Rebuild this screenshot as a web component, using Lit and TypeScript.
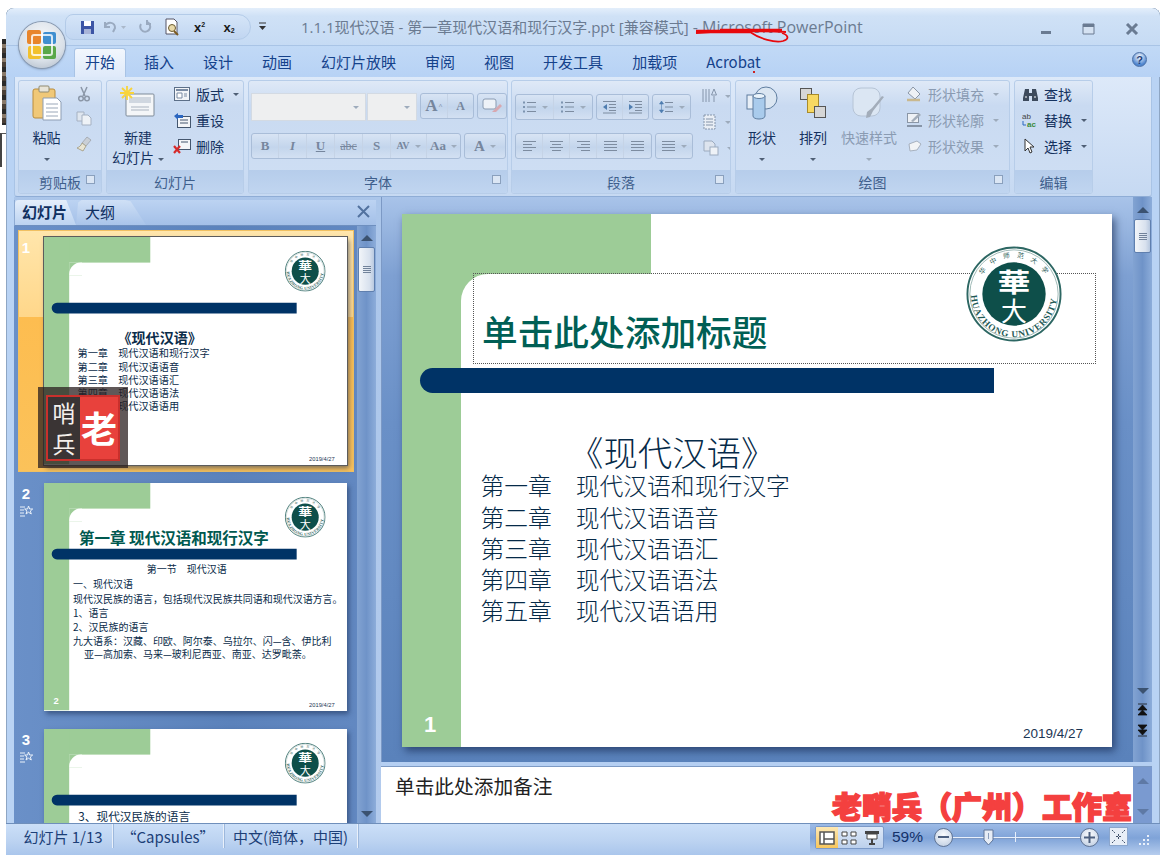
import { LitElement, html, css, svg } from "lit";
import { customElement, property } from "lit/decorators.js";

const CJK = `"Noto Sans CJK SC", "Liberation Sans", sans-serif`;

type Line = { text: string; x: number; y: number; size: number; bold?: boolean; color?: string };

const chapters: Line[] = [
  { text: "第一章　现代汉语和现行汉字", x: 78.5, y: 271, size: 23.8 },
  { text: "第二章　现代汉语语音", x: 78.5, y: 303, size: 23.8 },
  { text: "第三章　现代汉语语汇", x: 78.5, y: 334, size: 23.8 },
  { text: "第四章　现代汉语语法", x: 78.5, y: 365, size: 23.8 },
  { text: "第五章　现代汉语语用", x: 78.5, y: 396, size: 23.8 },
];

const slides: { num: string; lines: Line[] }[] = [
  { num: "", lines: [{ text: "《现代汉语》", x: 172, y: 234, size: 33, bold: true }, ...chapters] },
  {
    num: "2",
    lines: [
      { text: "第一章 现代汉语和现行汉字", x: 82, y: 126, size: 36.4, bold: true, color: "#00594f" },
      { text: "第一节　现代汉语", x: 241, y: 201, size: 23.4 },
      { text: "一、现代汉语", x: 68, y: 237, size: 23.4 },
      { text: "现代汉民族的语言，包括现代汉民族共同语和现代汉语方言。", x: 68, y: 272, size: 23.4 },
      { text: "1、语言", x: 68, y: 305, size: 23.4 },
      { text: "2、汉民族的语言", x: 68, y: 337, size: 23.4 },
      { text: "九大语系：汉藏、印欧、阿尔泰、乌拉尔、闪—含、伊比利", x: 68, y: 370, size: 23.4 },
      { text: "亚—高加索、马来—玻利尼西亚、南亚、达罗毗荼。", x: 94, y: 401, size: 23.4 },
    ],
  },
  { num: "", lines: [{ text: "3、现代汉民族的语言", x: 80, y: 204, size: 27.5 }] },
];

const logo = (size: number) => html`
  <svg width=${size} height=${size} viewBox="0 0 100 100">
    <defs>
      <path id="arcTop" d="M12 50 A38 38 0 0 1 88 50"></path>
      <path id="arcBottom" d="M5 50 A45 45 0 0 0 95 50"></path>
    </defs>
    <circle cx="50" cy="50" r="48.5" fill="#fff" stroke="#2d6763" stroke-width="2"></circle>
    <circle cx="50" cy="50" r="46" fill="none" stroke="#9db8b5" stroke-width="1"></circle>
    <circle cx="50" cy="50" r="33" fill="#0e4f4a"></circle>
    <text font-size="7" fill="#1f5a56" font-family=${CJK} letter-spacing="7"><textPath href="#arcTop" startOffset="17%">华中师范大学</textPath></text>
    <text font-size="9.6" font-weight="700" fill="#1f5a56" font-family="Liberation Serif, serif" letter-spacing="0.8"><textPath href="#arcBottom" startOffset="1%">HUAZHONG UNIVERSITY</textPath></text>
    <text x="50" y="50" text-anchor="middle" font-size="34" font-weight="700" fill="#fff" font-family=${CJK} transform="translate(0 8) scale(1 .8)">華</text>
    <text x="50" y="78" text-anchor="middle" font-size="27" fill="#fff" font-family=${CJK}>大</text>
  </svg>
`;

@customElement("slide-face")
export class SlideFace extends LitElement {
  @property({ type: Array }) lines: Line[] = [];
  @property() num = "";
  @property({ type: Boolean }) editing = false;

  static styles = css`
    :host { display: block; position: relative; width: 710px; height: 533px; background: #fff; overflow: hidden; font-family: "Noto Sans CJK SC", "Liberation Sans", sans-serif; }
    .band { position: absolute; left: 0; top: 0; width: 249px; height: 60px; background: #9dcc97; }
    .side { position: absolute; left: 0; top: 0; bottom: 0; width: 59px; background: #9dcc97; }
    .corner { position: absolute; left: 59px; top: 60px; width: 30px; height: 30px; background: #9dcc97; }
    .corner::after { content: ""; position: absolute; inset: 0; background: #fff; border-top-left-radius: 27px; }
    .bar { position: absolute; left: 18px; top: 154px; width: 574px; height: 25px; background: #003366; border-radius: 13px 0 0 13px; }
    .logo { position: absolute; left: 564px; top: 32px; width: 96px; height: 96px; }
    .box { position: absolute; left: 71px; top: 59px; width: 621px; height: 89px; border: 1px dotted #555; }
    .title { position: absolute; left: 80px; top: 92px; font-size: 35.7px; line-height: 50px; font-weight: 500; color: #005f55; white-space: nowrap; }
    .line { position: absolute; white-space: nowrap; color: #0a2c4a; font-weight: 400; line-height: 1.4; }
    :host([editing]) .line { font-weight: 300; color: #062a48; }
    .line.bold { font-weight: 700; }
    .date { position: absolute; left: 621px; top: 511px; font: 13.5px/18px "Liberation Sans", sans-serif; color: #1c3553; }
    .num { position: absolute; left: 22px; top: 497px; font: 700 22px/28px "Liberation Sans", sans-serif; color: #fff; }
  `;

  render() {
    return html`
      <div class="band"></div>
      <div class="side"></div>
      <div class="corner"></div>
      ${this.editing ? html`<div class="box"></div><div class="title">单击此处添加标题</div>` : ""}
      <div class="bar"></div>
      <div class="logo">${logo(96)}</div>
      ${this.lines.map(
        (l) => html`<div
          class="line ${l.bold ? "bold" : ""}"
          style="left:${l.x}px;top:${l.y - l.size * 0.7}px;font-size:${l.size}px;${l.color ? `color:${l.color}` : ""}"
        >${l.text}</div>`
      )}
      <div class="date">2019/4/27</div>
      ${this.num ? html`<div class="num">${this.num}</div>` : ""}
    `;
  }
}

const ico = {
  paste: html`<svg width="34" height="38" viewBox="0 0 34 38"><rect x="3" y="5" width="22" height="29" rx="2" fill="#f0c878" stroke="#b98c3c"/><rect x="9" y="2" width="10" height="6" rx="1" fill="#e8e4d8" stroke="#8f8a70"/><path d="M13 14h14l4 4v18H13z" fill="#fff" stroke="#8d9db3"/><path d="M16 20h12M16 24h12M16 28h12M16 32h12" stroke="#9aa7b8"/></svg>`,
  cut: html`<svg width="14" height="16" viewBox="0 0 14 16"><path d="M4 1l4 9M10 1L6 10" stroke="#8b97a8" stroke-width="1.5" fill="none"/><circle cx="4" cy="12.5" r="2.3" fill="none" stroke="#8b97a8" stroke-width="1.5"/><circle cx="10" cy="12.5" r="2.3" fill="none" stroke="#8b97a8" stroke-width="1.5"/></svg>`,
  copy: html`<svg width="16" height="15" viewBox="0 0 16 15"><path d="M1 1h7v9H1z" fill="#dfe6ef" stroke="#a5b1c2"/><path d="M6 4h6l3 3v7H6z" fill="#eef2f7" stroke="#a5b1c2"/></svg>`,
  brush: html`<svg width="16" height="16" viewBox="0 0 16 16"><path d="M11 1l4 3-5 6-4-3z" fill="#c9cfd6" stroke="#a7adb5"/><path d="M6 7l4 3-3 5-6-3c2-1 4-2 5-5z" fill="#e9e5d3" stroke="#aaa58f"/></svg>`,
  newSlide: html`<svg width="36" height="34" viewBox="0 0 36 34"><rect x="6" y="8" width="28" height="22" rx="1" fill="#f4f6f8" stroke="#7f8b99"/><path d="M9 11h22v6H9z" fill="#d0d7e0"/><path d="M11 21h18M11 24h18" stroke="#aab3bf"/><path d="M7 0v14M0 7h14M2 2l10 10M12 2L2 12" stroke="#f8d43c" stroke-width="1.8"/></svg>`,
  layout: html`<svg width="16" height="14" viewBox="0 0 16 14"><rect x=".5" y=".5" width="15" height="13" fill="#f3f5f8" stroke="#5c6f88"/><path d="M2 3h12" stroke="#7a8ba3" stroke-width="2"/><path d="M3 6h5v5H3z" fill="#fff" stroke="#7a8ba3"/><path d="M10 7h3M10 9h3" stroke="#7a8ba3"/></svg>`,
  reset: html`<svg width="18" height="16" viewBox="0 0 18 16"><rect x="4.500" y="4.500" width="13" height="11" fill="#f3f5f8" stroke="#44566e"/><path d="M7 8h8M7 11h8" stroke="#44566e"/><path d="M1 4l4-3v2h5v3H5v2z" fill="#2b66c0"/></svg>`,
  del: html`<svg width="18" height="15" viewBox="0 0 18 15"><rect x="5.500" y=".5" width="12" height="10" fill="#f3f5f8" stroke="#44566e"/><path d="M8 3h7" stroke="#44566e"/><path d="M1 7l6 7M7 7l-6 7" stroke="#d62b2b" stroke-width="2.200"/></svg>`,
  shape: html`<svg width="32" height="34" viewBox="0 0 32 34"><circle cx="20" cy="12" r="11" fill="#dbe6f2" stroke="#5f7d9f"/><rect x="1" y="9" width="14" height="14" fill="#e8eff7" stroke="#5f7d9f"/><path d="M7 10h12v20c0 4-12 4-12 0z" fill="#a9cbec" stroke="#5f7d9f"/><ellipse cx="13" cy="10" rx="6" ry="2.500" fill="#e9f3fb" stroke="#5f7d9f"/></svg>`,
  arrange: html`<svg width="26" height="31" viewBox="0 0 26 31"><rect x=".5" y=".5" width="11" height="11" fill="#d6d6d6" stroke="#555"/><rect x="7.500" y="6.500" width="11" height="18" fill="#f7d862" stroke="#a88b2c"/><rect x="14.500" y="18.500" width="11" height="11" fill="#d6d6d6" stroke="#555"/></svg>`,
  quick: html`<svg width="34" height="32" viewBox="0 0 34 32"><rect x="1" y="1" width="27" height="28" rx="8" fill="#dbe6f3" stroke="#b6c4d6"/><path d="M32 10L21 24l-3 6-4 1 1-6 5-4 10-12z" fill="#a3adba"/></svg>`,
  fill: html`<svg width="17" height="16" viewBox="0 0 17 16"><path d="M7 1l7 7-5 5-7-6z" fill="#eef1f5" stroke="#8a96a6"/><path d="M1 14h13" stroke="#c9b88e" stroke-width="2.500"/></svg>`,
  outline: html`<svg width="17" height="16" viewBox="0 0 17 16"><rect x="1.500" y="1.500" width="11" height="9" fill="#eef1f5" stroke="#8a96a6"/><path d="M5 9l8-8 2 2-8 7z" fill="#a3adba"/><path d="M1 14h15" stroke="#8795a8" stroke-width="2"/></svg>`,
  effect: html`<svg width="17" height="16" viewBox="0 0 17 16"><path d="M3 6l8-3 4 3-4 6-7 1z" fill="#f2f4f6" stroke="#a7b1bf"/></svg>`,
  find: html`<svg width="17" height="15" viewBox="0 0 17 15"><path d="M3 2h4v4h3V2h4l2 9v3h-6V9H7v5H1v-3z" fill="#3d4a5c"/><path d="M3 10h2M12 10h2" stroke="#fff"/></svg>`,
  replace: html`<svg width="16" height="16" viewBox="0 0 16 16"><text x="0" y="7" font-size="8" font-family="Liberation Sans" fill="#444">ab</text><text x="5" y="15" font-size="8" font-weight="700" font-family="Liberation Sans" fill="#3a8a3a">ac</text><path d="M1 9v4h3" stroke="#2b66c0" fill="none"/></svg>`,
  select: html`<svg width="12" height="16" viewBox="0 0 12 16"><path d="M1 1v12l3-3 2 5 2-1-2-5h4z" fill="#fff" stroke="#333"/></svg>`,
  star: html`<svg width="14" height="14" viewBox="0 0 14 14"><path d="M1 3h5M1 6h4M1 9h4M1 12h5" stroke="#eaf1fa"/><path d="M9.500 2l1.200 3h3l-2.400 2 1 3-2.800-1.800L7 10l1-3-2.400-2h3z" fill="none" stroke="#eaf1fa"/></svg>`,
  colText: html`<svg width="16" height="16" viewBox="0 0 16 16"><path d="M1 1v13M4 1v13M7 1v13" stroke="#8494aa"/><path d="M12 1l-2.500 6h5zM12 14V8" stroke="#8494aa" fill="none"/></svg>`,
  align: html`<svg width="16" height="16" viewBox="0 0 16 16"><rect x="2" y="1" width="11" height="14" fill="#e9eef5" stroke="#8494aa" stroke-dasharray="2 1"/><path d="M4 5h7M4 8h7M4 11h7" stroke="#8494aa"/></svg>`,
  smart: html`<svg width="18" height="16" viewBox="0 0 18 16"><path d="M2 1h8l3 3v7H2z" fill="#dde4ee" stroke="#9cabbf"/><rect x="8" y="7" width="8" height="8" fill="#eef2f7" stroke="#9cabbf"/></svg>`,
};

const lines = (rows: number[][], color = "#7d8ca0") => html`<svg width="15" height="14" viewBox="0 0 15 14">${rows.map(
  ([x1, x2], i) => svg`<path d="M${x1} ${2.5 + i * 3}H${x2}" stroke=${color}></path>`
)}</svg>`;

const listIcon = html`<svg width="15" height="14" viewBox="0 0 15 14"><path d="M5 2.500h9M5 7h9M5 11.500h9" stroke="#7d8ca0"/><path d="M1 1.500h2v2H1zM1 6h2v2H1zM1 10.500h2v2H1z" fill="#7d94b0"/></svg>`;
const indentL = html`<svg width="15" height="14" viewBox="0 0 15 14"><path d="M1 1.500h13M7 4.500h7M7 7.500h7M7 10.500h7M1 13h13" stroke="#7d8ca0"/><path d="M5 4v6L1 7z" fill="#4f7db0"/></svg>`;
const indentR = html`<svg width="15" height="14" viewBox="0 0 15 14"><path d="M1 1.500h13M7 4.500h7M7 7.500h7M7 10.500h7M1 13h13" stroke="#7d8ca0"/><path d="M1 4v6L5 7z" fill="#4f7db0"/></svg>`;
const spacing = html`<svg width="15" height="14" viewBox="0 0 15 14"><path d="M6 2.500h8M6 7h8M6 11.500h8" stroke="#7d8ca0"/><path d="M2.500 1L4.500 4h-4zM2.500 13L.5 10h4zM2.500 4v6" fill="#4f7db0" stroke="#4f7db0" stroke-width=".6"/></svg>`;

@customElement("app-root")
export class AppRoot extends LitElement {
  static styles = css`
    :host { display: block; position: relative; width: 1162px; height: 857px; background: #fff; overflow: hidden; font-family: "Noto Sans CJK SC", "Liberation Sans", sans-serif; color: #15428b; }
    .stray { position: absolute; left: 2px; top: 39px; width: 4px; height: 86px; background: repeating-linear-gradient(180deg, #2a2a2a 0 5px, #8a7a6a 5px 9px, #4a4038 9px 14px); }
    .stray2 { position: absolute; left: 0; top: 133px; width: 6px; height: 34px; border-left: 2px solid #444; border-top: 1px solid #555; box-sizing: border-box; }
    .win { position: absolute; left: 6px; top: 8px; width: 1154px; height: 847px; display: flex; flex-direction: column; border-radius: 8px 8px 0 0; background: #b9d3f4; box-shadow: inset 0 1px 0 #4a5f78, inset 1px 0 0 #8ea6c4, inset -1px 0 0 #8ea6c4; overflow: hidden; }

    .titlebar { height: 38px; flex: none; display: flex; align-items: center; background: linear-gradient(180deg, #e3eefb 0, #cfe1f6 22%, #c6dbf4 100%); border-bottom: 1px solid #a9c4e6; box-sizing: border-box; padding-left: 59px; }
    .qat { width: 186px; height: 26px; margin-top: 1px; display: flex; align-items: center; padding-left: 9px; box-sizing: border-box; border-radius: 8px 13px 13px 8px; background: linear-gradient(180deg, #d5e5f8, #c1d6f1); border: 1px solid #b3cbe8; }
    .qat span, .qat svg { flex: none; }
    .qat .q { display: flex; justify-content: center; align-items: center; font: 700 13px "Liberation Sans", sans-serif; color: #1a1a1a; }
    .more { margin-left: 7px; width: 9px; }
    .wintitle { margin-left: 34px; font-family: "Open Sans", "Noto Sans CJK SC", sans-serif; font-size: 15px; color: #6b7b91; white-space: nowrap; width: 590px; line-height: 20px; }
    .wintitle span { font-size: 16px; }
    .winbtns { margin: 4px 0 0 auto; display: flex; align-items: center; padding-right: 21px; gap: 30px; }
    .winbtns svg { display: block; }

    .officebtn { position: absolute; left: 19px; top: 22px; width: 46px; height: 46px; border-radius: 50%; background: radial-gradient(circle at 50% 35%, #f6f8fa 0, #d9e0e8 60%, #a9b4c2 100%); box-shadow: 0 0 0 1px #8b9bb0, 0 1px 3px #6d83a3; display: flex; align-items: center; justify-content: center; }

    .tabs { height: 31px; flex: none; display: flex; align-items: flex-end; background: linear-gradient(180deg, #c1d9f6, #b7d2f5); padding-left: 64.500px; box-sizing: border-box; font-size: 15px; position: relative; }
    .tab { height: 28px; line-height: 26px; padding: 0 11px; margin: 0 3.500px; white-space: nowrap; }
    .tab.on { background: linear-gradient(180deg, #f2f7fd, #dfeafa); border: 1px solid #a8c3e5; border-bottom: 0; border-radius: 3px 3px 0 0; padding: 0 10px; }
    .help { position: absolute; right: 13px; top: 6px; width: 15px; height: 15px; border-radius: 50%; background: radial-gradient(circle at 50% 30%, #fff, #4f86d0 70%); border: 1px solid #4a6fa5; text-align: center; font: 700 11px/15px "Liberation Sans", sans-serif; color: #1f3f7a; box-sizing: border-box; }
    .dot { position: absolute; left: 747px; top: 25px; width: 2px; height: 2px; background: #c22; }

    .ribbon { height: 120px; flex: none; margin: 0 8px; padding: 3px 3px 2px; box-sizing: border-box; display: flex; gap: 4px; background: linear-gradient(180deg, #dde9f9, #c6d9f2); border: 1px solid #a9c4e6; border-top: 0; border-bottom: 1px solid #8fadd6; border-radius: 0 0 3px 3px; }
    .group { display: flex; flex-direction: column; flex: none; border: 1px solid #b7cde9; border-radius: 3px; background: linear-gradient(180deg, #dfe9f7 0, #c9daf1 22%, #cfdff4 100%); box-sizing: border-box; overflow: hidden; }
    .gbody { flex: 1; display: flex; min-height: 0; }
    .glabel { height: 23px; flex: none; display: flex; align-items: center; justify-content: center; position: relative; background: linear-gradient(180deg, #b6cdeb, #c0d5f0); font-size: 14px; color: #3f5f8c; }
    .launcher { position: absolute; right: 6px; top: 5px; width: 9px; height: 9px; border: 1px solid #8aa0bd; background: #dbe6f4; box-sizing: border-box; }

    .big { display: flex; flex-direction: column; align-items: center; font-size: 14px; line-height: 20px; color: #15325f; flex: none; }
    .big .pic { height: 40px; margin-top: 2px; display: flex; align-items: center; justify-content: center; }
    .big .txt { margin-top: 4px; text-align: center; white-space: nowrap; }
    .big.off { color: #8a9bb2; }
    .caret { display: inline-block; width: 0; height: 0; border: 3px solid transparent; border-top: 3.500px solid #4f5f75; border-bottom: 0; vertical-align: middle; margin-left: 4px; }
    .off .caret, .caret.off { border-top-color: #9dabbc; }
    .col { display: flex; flex-direction: column; justify-content: flex-start; }
    .item { height: 26px; display: flex; align-items: center; gap: 5px; font-size: 14px; color: #15325f; white-space: nowrap; }
    .item .i { width: 18px; display: flex; justify-content: center; flex: none; }
    .item.off { color: #8a9bb2; }
    .sm { height: 25px; display: flex; align-items: center; justify-content: center; }

    .rows { display: flex; flex-direction: column; padding: 12px 0 0 2px; gap: 14px; }
    .rows.para { padding: 13px 0 0 3px; gap: 13px; }
    .row { display: flex; gap: 3px; height: 26px; }
    .combo { height: 28px; background: #eeeff0; border: 1px solid #d3dae3; box-sizing: border-box; display: flex; align-items: center; justify-content: flex-end; padding-right: 6px; flex: none; }
    .seg { display: flex; height: 26px; box-sizing: border-box; border: 1px solid #a9bdd8; border-radius: 3px; background: linear-gradient(180deg, #d8e4f4, #c3d5ec 55%, #d3e0f2); align-items: center; flex: none; }
    .seg > span { height: 100%; display: flex; align-items: center; justify-content: center; border-right: 1px solid #c5d3e6; box-sizing: border-box; color: #76869d; font: 700 13px "Liberation Serif", serif; gap: 1px; }
    .seg > span:last-child { border-right: 0; }
    .mini { display: flex; flex-direction: column; align-items: center; }
    .pcol { display: flex; flex-direction: column; padding: 2px 0 0 9px; }
    .pcol div { height: 26px; display: flex; align-items: center; gap: 3px; }

    .main { flex: 1; min-height: 0; margin: 0 8px; display: flex; background: #6a8fc5; }
    .left { width: 362px; flex: none; display: flex; flex-direction: column; padding-top: 3px; box-sizing: border-box; background: linear-gradient(180deg, #abc6ea 0, #a2bee6 4%, #6a90c7 5%); }
    .ltabs { height: 26px; flex: none; display: flex; align-items: flex-end; position: relative; font-size: 15px; color: #0f2f60; border-bottom: 1px solid #6e8fbf; box-sizing: border-box; background: linear-gradient(180deg, #bcd3f2, #a4c0e8); border-left: 1px solid #8eabd3; }
    .ltab { height: 25px; line-height: 24px; box-sizing: border-box; }
    .ltab.on { width: 61px; padding-left: 7px; background: linear-gradient(180deg, #e4eefb, #bcd3f1); font-weight: 700; border-radius: 4px 4px 0 0; clip-path: polygon(0 0, 84% 0, 100% 100%, 0 100%); }
    .ltab.off { width: 70px; padding-left: 9px; background: linear-gradient(180deg, #cfe0f6, #a9c4ea); clip-path: polygon(0 100%, 3% 10%, 8% 0, 70% 0, 78% 5%, 100% 100%); }
    .lclose { position: absolute; right: 6px; top: 5px; }
    .lbody { flex: 1; min-height: 0; display: flex; background: linear-gradient(90deg, #6a90c8, #5b82bb 60%, #6389c2); }
    .list { width: 343px; flex: none; overflow: hidden; padding: 4px 0 0 4px; box-sizing: border-box; display: flex; flex-direction: column; gap: 4px; }
    .thumb { flex: none; width: 336px; padding: 7px; padding-left: 26px; box-sizing: border-box; position: relative; }
    .thumb.on { background: linear-gradient(180deg, #ffe6ac 0, #ffd78a 36%, #fdbd50 36%, #fbc25a 100%); box-shadow: inset 0 0 0 1px #f0c062; }
    .nr { position: absolute; left: 0; top: 9px; width: 16px; text-align: center; font: 700 15px/18px "Liberation Sans", sans-serif; color: #fff; }
    .nr svg { display: block; margin: 1px auto 0; }
    .frame { width: 303px; height: 228px; overflow: hidden; background: #fff; box-shadow: 0 0 0 1px #5c5c5c, 2px 3px 5px rgba(30, 50, 90, .6); }
    .thumb:not(.on) .frame { box-shadow: 2px 3px 5px rgba(30, 50, 90, .6); }
    .frame slide-face { transform: scale(.4268); transform-origin: 0 0; }
    .stamp { position: absolute; left: 20px; top: 157px; width: 90px; height: 81px; background: rgba(40, 30, 30, .74); z-index: 2; display: flex; align-items: center; justify-content: center; }
    .stamp .in { width: 74px; height: 66px; border: 2px solid #c9302c; box-sizing: border-box; display: flex; }
    .stamp .a { width: 32px; display: flex; flex-direction: column; align-items: center; justify-content: space-around; background: #3a3434; color: #f5f0ec; font-size: 23px; line-height: 26px; font-weight: 400; }
    .stamp .b { flex: 1; background: #e8413c; color: #fff; font-size: 36px; font-weight: 700; line-height: 60px; text-align: center; }

    .split { width: 5px; flex: none; background: linear-gradient(180deg, #abc6ea, #b3cbed); }
    .right { width: 771px; flex: none; display: flex; flex-direction: column; }
    .editor { flex: 1; min-height: 0; display: flex; }
    .canvas { width: 752px; flex: none; padding: 17px 0 0 21px; box-sizing: border-box; background: linear-gradient(180deg, #a8c3e9 0, #7ea0d2 14%, #6a90c7 40%, #5a82bb 100%); box-shadow: inset 1px 0 0 #7c99c5; }
    .canvas slide-face { box-shadow: 3px 4px 8px rgba(20, 40, 80, .65); }
    .hsplit { height: 5px; flex: none; background: #b5cff2; border-bottom: 1px solid #7d9ac4; box-sizing: border-box; }
    .notes { height: 56px; flex: none; display: flex; position: relative; }
    .notebox { width: 752px; flex: none; background: #fff; padding: 6px 0 0 14px; box-sizing: border-box; font-size: 19.700px; line-height: 26px; color: #222; }
    .watermark { position: absolute; left: 451px; top: 20px; font-size: 30px; line-height: 36px; font-weight: 900; color: #f4403f; white-space: nowrap; -webkit-text-stroke: 1.500px #f4403f; }

    .bar { width: 19px; flex: none; display: flex; flex-direction: column; align-items: center; background: linear-gradient(90deg, #82a3d2, #6f93c8 50%, #8dadda); position: relative; box-sizing: border-box; }
    .arrow { width: 100%; height: 19px; flex: none; display: flex; align-items: center; justify-content: center; }
    .up { width: 0; height: 0; border: 6px solid transparent; border-bottom: 6px solid #3b5270; border-top: 0; }
    .dn { width: 0; height: 0; border: 6px solid transparent; border-top: 6px solid #3b5270; border-bottom: 0; }
    .knob { width: 17px; box-sizing: border-box; border: 1px solid #5f7fae; border-radius: 2px; background: linear-gradient(90deg, #f2f5f9, #d8e1ee 70%, #b9c9e0); display: flex; align-items: center; justify-content: center; flex: none; }
    .grip { width: 8px; height: 7px; background: repeating-linear-gradient(180deg, #71829a 0 1px, transparent 1px 2px); }
    .fill { flex: 1; }
    .nav { display: flex; flex-direction: column; align-items: center; gap: 6px; height: 62px; padding-top: 3px; box-sizing: border-box; flex: none; }
    .nav svg { display: block; }
    .notes .bar { background: #7a9ad0; justify-content: space-between; padding: 2px 0; }
    .notes .up, .notes .dn { opacity: .45; }

    .status { height: 32px; flex: none; display: flex; align-items: stretch; background: linear-gradient(180deg, #cbdff8 0, #bcd3f1 55%, #aac6ec 100%); border-top: 1px solid #6f8fbb; box-sizing: border-box; font-size: 15px; color: #1c3f78; position: relative; }
    .cell { display: flex; align-items: center; height: 24px; border-right: 1px solid #e9f0fa; box-shadow: 1px 0 0 #9db8dc; box-sizing: border-box; justify-content: center; white-space: nowrap; flex: none; }
    .zoomarea { margin-left: auto; width: 350px; flex: none; display: flex; align-items: flex-start; padding: 2px 0 0 5px; box-sizing: border-box; background: linear-gradient(180deg, #9dbbe6, #7fa3d8 45%, #b6cdee); }
    .views { display: flex; width: 69px; height: 23px; border: 1px solid #7c9ac8; border-radius: 2px; background: linear-gradient(180deg, #dde8f7, #bcd0ec); flex: none; box-sizing: border-box; }
    .views span { flex: 1; display: flex; align-items: center; justify-content: center; }
    .views span.on { background: linear-gradient(180deg, #fde8b4, #f7c65c); }
    .pct { width: 42px; margin-left: 8px; font-size: 15.500px; line-height: 22px; color: #14316a; font-family: "Liberation Sans", sans-serif; text-align: left; flex: none; }
    .round { width: 19px; height: 19px; border-radius: 50%; border: 1px solid #5f7394; box-sizing: border-box; background: radial-gradient(circle at 50% 35%, #fbfcfe, #b9c9df); flex: none; display: flex; align-items: center; justify-content: center; margin-top: 2px; }
    .slider { width: 127px; height: 23px; position: relative; flex: none; }
    .slider .track { position: absolute; left: 0; right: 0; top: 11px; height: 1px; background: #e8f0fb; box-shadow: 0 1px 0 #7f9ac5; }
    .slider .tick { position: absolute; left: 62px; top: 6px; width: 1px; height: 10px; background: #e8f0fb; }
    .slider .thumbk { position: absolute; left: 30px; top: 3px; }
    .fit { width: 19px; height: 19px; margin: 1px 0 0 10px; background: #e8eef7; border: 1px solid #8ba6cd; box-sizing: border-box; flex: none; }
    .sgrip { margin: 8px 0 0 10px; flex: none; }
  `;

  private big(icon: unknown, text: unknown, width: number, off = false) {
    return html`<div class="big ${off ? "off" : ""}" style="width:${width}px"><div class="pic">${icon}</div><div class="txt">${text}</div></div>`;
  }

  private item(icon: unknown, text: string, caret: boolean, off = false) {
    return html`<div class="item ${off ? "off" : ""}"><span class="i">${icon}</span>${text}${caret ? html`<i class="caret"></i>` : ""}</div>`;
  }

  private group(width: number, label: string, launcher: boolean, body: unknown) {
    return html`<div class="group" style="width:${width}px">
      <div class="gbody">${body}</div>
      <div class="glabel">${label}${launcher ? html`<i class="launcher"></i>` : ""}</div>
    </div>`;
  }

  private seg(items: [unknown, number][]) {
    return html`<div class="seg">${items.map(
      ([c, w]) => html`<span style="width:${w}px">${c}</span>`
    )}</div>`;
  }

  private scrollbar(knobH: number, nav: boolean) {
    return html`<div class="bar">
      <div class="arrow" style="margin-top:${nav ? 3 : 2}px"><i class="up"></i></div>
      ${knobH ? html`<div class="knob" style="height:${knobH}px"><i class="grip"></i></div>` : ""}
      <div class="fill"></div>
      <div class="arrow"><i class="dn"></i></div>
      ${nav
        ? html`<div class="nav">
            <svg width="11" height="14" viewBox="0 0 11 14"><path d="M1 1h9M5.500 2L10 7H1zM5.500 7L10 12H1z" fill="#111" stroke="#111" stroke-width=".8"/></svg>
            <svg width="11" height="14" viewBox="0 0 11 14"><path d="M1 13h9M5.500 12L10 7H1zM5.500 7L10 2H1z" fill="#111" stroke="#111" stroke-width=".8"/></svg>
          </div>`
        : ""}
    </div>`;
  }

  render() {
    const c = html`<i class="caret off"></i>`;
    const lf = lines([[1, 14], [1, 10], [1, 14], [1, 10]]);
    const ct = lines([[1, 14], [3, 12], [1, 14], [3, 12]]);
    const rt = lines([[1, 14], [5, 14], [1, 14], [5, 14]]);
    const ju = lines([[1, 14], [1, 14], [1, 14], [1, 14]]);
    return html`
      <div class="stray"></div>
      <div class="stray2"></div>
      <div class="win">
        <div class="titlebar">
          <div class="qat">
            <span class="q" style="width:24px"><svg width="15" height="15" viewBox="0 0 15 15"><path d="M1 1h13v13H1z" fill="#3c55a5"/><path d="M4 1h7v5H4z" fill="#fff"/><path d="M4 9h7v5H4z" fill="#a8b4d8"/></svg></span>
            <span class="q" style="width:30px"><svg width="24" height="14" viewBox="0 0 24 14"><path d="M3 6c3-5 10-4 10 2l-2 4M3 2v5h5" fill="none" stroke="#9aaac0" stroke-width="2"/><path d="M19 6l2.500 3L24 6z" fill="#aab8ca"/></svg></span>
            <span class="q" style="width:31px"><svg width="14" height="14" viewBox="0 0 14 14"><path d="M11 4a5 5 0 1 1-6-2M5 0v4H1" fill="none" stroke="#9aaac0" stroke-width="2" transform="matrix(-1 0 0 1 14 0)"/></svg></span>
            <span class="q" style="width:24px"><svg width="17" height="18" viewBox="0 0 17 18"><path d="M2 1h8l3 3v12H2z" fill="#fff" stroke="#556"/><circle cx="8" cy="10" r="3.500" fill="#e8d9a8" stroke="#6a5a30"/><path d="M10 13l4 4" stroke="#7a5a20" stroke-width="2"/></svg></span>
            <span class="q" style="width:31px">x<sup style="font-size:7px;margin-top:-6px">2</sup></span>
            <span class="q" style="width:28px">x<sub style="font-size:7px;margin-bottom:-6px">2</sub></span>
          </div>
          <svg class="more" width="9" height="9" viewBox="0 0 9 9"><path d="M1 1h7" stroke="#333"/><path d="M1 4h7L4.500 8z" fill="#333"/></svg>
          <div class="wintitle">1.1.1现代汉语 - 第一章现代汉语和现行汉字.ppt [兼容模式]<span> - Microsoft PowerPoint</span></div>
          <div class="winbtns">
            <svg width="12" height="12" viewBox="0 0 12 12"><path d="M1 8h10v3H1z" fill="#6a7b92"/></svg>
            <svg width="13" height="12" viewBox="0 0 13 12"><path d="M1 1h11v10H1z" fill="#d5e2f2" stroke="#6a7b92"/><path d="M1 1h11v3H1z" fill="#6a7b92"/></svg>
            <svg width="14" height="12" viewBox="0 0 14 12"><path d="M2 1l10 10M12 1L2 11" stroke="#6a7b92" stroke-width="3"/></svg>
          </div>
        </div>
        <div class="tabs">
          ${["开始", "插入", "设计", "动画", "幻灯片放映", "审阅", "视图", "开发工具", "加载项", "Acrobat"].map(
            (t, i) => html`<div class="tab ${i === 0 ? "on" : ""}">${t}</div>`
          )}
          <div class="dot"></div>
          <div class="help">?</div>
        </div>
        <div class="ribbon">
          ${this.group(84, "剪贴板", true, html`
            ${this.big(ico.paste, html`粘贴<br /><i class="caret" style="margin:0"></i>`, 55)}
            <div class="mini" style="width:20px">
              <div class="sm">${ico.cut}</div><div class="sm">${ico.copy}</div><div class="sm">${ico.brush}</div>
            </div>
          `)}
          ${this.group(138, "幻灯片", false, html`
            ${this.big(ico.newSlide, html`新建<br />幻灯片<i class="caret"></i>`, 62)}
            <div class="col" style="margin-left:4px">
              ${this.item(ico.layout, "版式", true)}
              ${this.item(ico.reset, "重设", false)}
              ${this.item(ico.del, "删除", false)}
            </div>
          `)}
          ${this.group(260, "字体", true, html`
            <div class="rows">
              <div class="row">
                <div class="combo" style="width:115px">${c}</div>
                <div class="combo" style="width:50px;margin-left:-2px">${c}</div>
                ${this.seg([[html`<span style="font-size:17px">A</span><sup style="font-size:7px">^</sup>`, 27], [html`<span style="font-size:12px">A</span>`, 25]])}
                ${this.seg([[html`<svg width="20" height="16" viewBox="0 0 20 16"><rect x="1" y="1" width="13" height="10" rx="2" fill="#eef2f8" stroke="#8a9bb2"/><path d="M10 14l8-8 2 2-6 6z" fill="#d8a8b0"/></svg>`, 28]])}
              </div>
              <div class="row">
                ${this.seg([
                  [html`B`, 27], [html`<i>I</i>`, 28], [html`<u>U</u>`, 28], [html`<s style="font-weight:400;font-size:12px">abc</s>`, 28], [html`S`, 28],
                  [html`<span style="font-size:10px;line-height:10px">AV</span>${c}`, 36], [html`Aa${c}`, 33],
                ])}
                ${this.seg([[html`<span style="font-size:15px">A</span>${c}`, 40]])}
              </div>
            </div>
          `)}
          <div style="margin-left:-1px;display:flex">
            ${this.group(220, "段落", true, html`
              <div class="rows para">
                <div class="row">
                  ${this.seg([[html`${listIcon}${c}`, 38], [html`${listIcon}${c}`, 38]])}
                  ${this.seg([[indentL, 26], [indentR, 25]])}
                  ${this.seg([[html`${spacing}${c}`, 37]])}
                </div>
                <div class="row">
                  ${this.seg([[lf, 27], [ct, 27], [rt, 27], [ju, 27], [ju, 27]])}
                  ${this.seg([[html`${ju}${c}`, 36]])}
                </div>
              </div>
              <div class="pcol">
                <div>${ico.colText}${c}</div>
                <div>${ico.align}${c}</div>
                <div>${ico.smart}${c}</div>
              </div>
            `)}
          </div>
          ${this.group(275, "绘图", true, html`
            ${this.big(ico.shape, html`形状<br /><i class="caret" style="margin:0"></i>`, 52)}
            ${this.big(ico.arrange, html`排列<br /><i class="caret" style="margin:0"></i>`, 50)}
            ${this.big(ico.quick, html`快速样式<br /><i class="caret" style="margin:0"></i>`, 62, true)}
            <div class="col" style="margin-left:5px">
              ${this.item(ico.fill, "形状填充", true, true)}
              ${this.item(ico.outline, "形状轮廓", true, true)}
              ${this.item(ico.effect, "形状效果", true, true)}
            </div>
          `)}
          ${this.group(79, "编辑", false, html`
            <div class="col" style="padding-left:6px">
              ${this.item(ico.find, "查找", false)}
              ${this.item(ico.replace, "替换", true)}
              ${this.item(ico.select, "选择", true)}
            </div>
          `)}
        </div>
        <div class="main">
          <div class="left">
            <div class="ltabs">
              <div class="ltab on">幻灯片</div>
              <div class="ltab off">大纲</div>
              <svg class="lclose" width="13" height="13" viewBox="0 0 13 13"><path d="M1 1l11 11M12 1L1 12" stroke="#52729f" stroke-width="2"/></svg>
            </div>
            <div class="lbody">
              <div class="list">
                ${slides.map(
                  (s, i) => html`<div class="thumb ${i === 0 ? "on" : ""}">
                    <div class="nr">${i + 1}${i > 0 ? ico.star : ""}</div>
                    <div class="frame"><slide-face .lines=${s.lines} .num=${s.num}></slide-face></div>
                    ${i === 0
                      ? html`<div class="stamp"><div class="in"><div class="a"><span>哨</span><span>兵</span></div><div class="b">老</div></div></div>`
                      : ""}
                  </div>`
                )}
              </div>
              ${this.scrollbar(45, false)}
            </div>
          </div>
          <div class="split"></div>
          <div class="right">
            <div class="editor">
              <div class="canvas">
                <slide-face editing num="1" .lines=${slides[0].lines.map((l, i) => (i === 0 ? { ...l, bold: false, x: 167, y: 237, size: 34.4 } : l))}></slide-face>
              </div>
              ${this.scrollbar(34, true)}
            </div>
            <div class="hsplit"></div>
            <div class="notes">
              <div class="notebox">单击此处添加备注</div>
              ${this.scrollbar(0, false)}
              <div class="watermark">老哨兵（广州）工作室</div>
            </div>
          </div>
        </div>
        <div class="status">
          <div class="cell" style="width:107px;padding-left:8px">幻灯片 1/13</div>
          <div class="cell" style="width:111px">“Capsules”</div>
          <div class="cell" style="width:134px">中文(简体，中国)</div>
          <div class="zoomarea">
            <div class="views">
              <span class="on"><svg width="16" height="14" viewBox="0 0 16 14"><path d="M1 1h14v12H1z" fill="#fff" stroke="#555" stroke-width="1.500"/><path d="M5 1v12M5 8h10" stroke="#555" stroke-width="1.500"/></svg></span>
              <span><svg width="16" height="14" viewBox="0 0 16 14"><path d="M1 1h5v4H1zM10 1h5v4h-5zM1 9h5v4H1zM10 9h5v4h-5z" fill="#fff" stroke="#444"/></svg></span>
              <span><svg width="16" height="15" viewBox="0 0 16 15"><path d="M1 1h14v3H1z" fill="#444"/><path d="M3 4h10v5H3z" fill="#fff" stroke="#444"/><path d="M8 9v5M5 14h6" stroke="#444" stroke-width="2"/></svg></span>
            </div>
            <div class="pct">59%</div>
            <div class="round"><svg width="11" height="3"><rect width="11" height="2" fill="#4d6080"/></svg></div>
            <div class="slider">
              <div class="track"></div><div class="tick"></div>
              <svg class="thumbk" width="11" height="17" viewBox="0 0 11 17"><path d="M1 1h9v10l-4.500 5L1 11z" fill="#e6ecf5" stroke="#5e7599"/><path d="M5.500 4v6" stroke="#8a9dbb"/></svg>
            </div>
            <div class="round"><svg width="11" height="11"><path d="M0 5.500h11M5.500 0v11" stroke="#4d6080" stroke-width="2"/></svg></div>
            <div class="fit"><svg width="17" height="17" viewBox="0 0 17 17"><path d="M2 2l3 3M15 2l-3 3M2 15l3-3M15 15l-3-3M8.500 6v5M6 8.500h5" stroke="#40506a" stroke-dasharray="2 1"/></svg></div>
            <svg class="sgrip" width="12" height="12" viewBox="0 0 12 12"><path d="M9 1h2v2H9zM5 5h2v2H5zM9 5h2v2H9zM1 9h2v2H1zM5 9h2v2H5zM9 9h2v2H9z" fill="#eaf1fb"/></svg>
          </div>
        </div>
        <svg style="position:absolute;left:684px;top:14px" width="108" height="24" viewBox="0 0 108 24">
          <path d="M6 11C30 9 60 8 96 10M60 10c10 7 25 11 33 9 7-2 5-6-1-8" fill="none" stroke="#e8090d" stroke-width="1.800"/>
          <path d="M6 9.500H60M30 8.500H92" stroke="#e8090d" stroke-width="3.500"/>
        </svg>
      </div>
      <div class="officebtn">
        <svg width="32" height="32" viewBox="0 0 32 32"><rect x="1" y="1" width="14" height="14" rx="2" fill="#e8852b"/><rect x="17" y="3" width="13" height="12" rx="2" fill="#3f8fd0"/><rect x="2" y="17" width="13" height="13" rx="2" fill="#f2c12e"/><rect x="17" y="17" width="13" height="13" rx="2" fill="#5aa84a"/><rect x="6" y="6" width="20" height="20" rx="2" fill="none" stroke="#fff" stroke-width="2" opacity=".8"/></svg>
      </div>
    `;
  }
}
